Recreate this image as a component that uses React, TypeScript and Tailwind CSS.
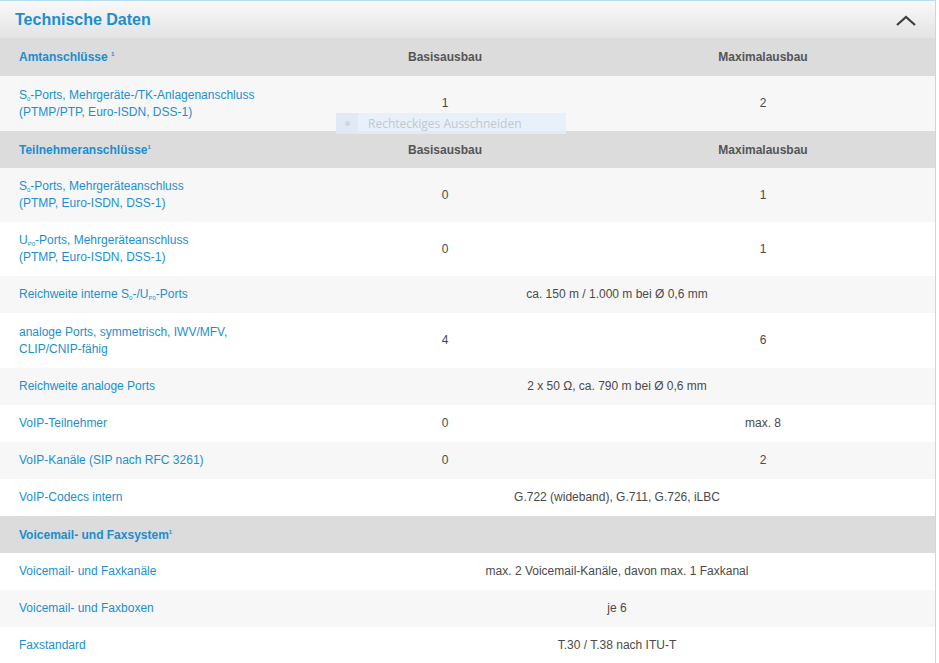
import React from "react";

type Row =
  | { kind: "section"; label: React.ReactNode; cols?: boolean; h: string }
  | { kind: "row"; label: React.ReactNode; a?: string; b?: string; span?: string; h: string; gray: boolean };

// tiny sub/superscripts, shifted without touching the line box
const Sub = ({ children }: { children: React.ReactNode }) => (
  <span className="relative top-[2px] text-[6px] leading-none">{children}</span>
);

const Sup = ({ children }: { children: React.ReactNode }) => (
  <span className="relative -top-[5px] text-[6px] leading-none">{children}</span>
);

const rows: Row[] = [
  { kind: "section", label: <>Amtanschlüsse <Sup>1</Sup></>, cols: true, h: "h-[38px]" },
  {
    kind: "row",
    label: <>S<Sub>0</Sub>-Ports, Mehrgeräte-/TK-Anlagenanschluss<br />(PTMP/PTP, Euro-ISDN, DSS-1)</>,
    a: "1",
    b: "2",
    h: "h-[55px]",
    gray: true,
  },
  { kind: "section", label: <>Teilnehmeranschlüsse<Sup>1</Sup></>, cols: true, h: "h-[37px]" },
  {
    kind: "row",
    label: <>S<Sub>0</Sub>-Ports, Mehrgeräteanschluss<br />(PTMP, Euro-ISDN, DSS-1)</>,
    a: "0",
    b: "1",
    h: "h-[54px]",
    gray: true,
  },
  {
    kind: "row",
    label: <>U<Sub>P0</Sub>-Ports, Mehrgeräteanschluss<br />(PTMP, Euro-ISDN, DSS-1)</>,
    a: "0",
    b: "1",
    h: "h-[54px]",
    gray: false,
  },
  {
    kind: "row",
    label: <>Reichweite interne S<Sub>0</Sub>-/U<Sub>P0</Sub>-Ports</>,
    span: "ca. 150 m / 1.000 m bei Ø 0,6 mm",
    h: "h-[37px]",
    gray: true,
  },
  {
    kind: "row",
    label: <>analoge Ports, symmetrisch, IWV/MFV,<br />CLIP/CNIP-fähig</>,
    a: "4",
    b: "6",
    h: "h-[55px]",
    gray: false,
  },
  { kind: "row", label: "Reichweite analoge Ports", span: "2 x 50 Ω, ca. 790 m bei Ø 0,6 mm", h: "h-[37px]", gray: true },
  { kind: "row", label: "VoIP-Teilnehmer", a: "0", b: "max. 8", h: "h-[37px]", gray: false },
  { kind: "row", label: "VoIP-Kanäle (SIP nach RFC 3261)", a: "0", b: "2", h: "h-[37px]", gray: true },
  { kind: "row", label: "VoIP-Codecs intern", span: "G.722 (wideband), G.711, G.726, iLBC", h: "h-[37px]", gray: false },
  { kind: "section", label: <>Voicemail- und Faxsystem<Sup>1</Sup></>, h: "h-[37px]" },
  { kind: "row", label: "Voicemail- und Faxkanäle", span: "max. 2 Voicemail-Kanäle, davon max. 1 Faxkanal", h: "h-[37px]", gray: false },
  { kind: "row", label: "Voicemail- und Faxboxen", span: "je 6", h: "h-[37px]", gray: true },
  { kind: "row", label: "Faxstandard", span: "T.30 / T.38 nach ITU-T", h: "h-[37px]", gray: false },
];

export default function App() {
  return (
    <div className="relative w-[939px] h-[663px] overflow-hidden bg-white font-['Liberation_Sans',Arial,sans-serif] text-[12px]">
      <div className="w-[936px] border-t border-r border-[#b5def3]">
        {/* Header */}
        <div className="flex items-center justify-between h-[37px] pl-[15px] pr-[18px] bg-gradient-to-b from-[#f9f9f9] to-[#e3e3e3]">
          <h2 className="text-[16px] font-bold text-[#1b8dd0] leading-none">Technische Daten</h2>
          <svg width="22" height="14" viewBox="0 0 22 14" className="mt-[2px]">
            <path d="M2 11 L11 3 L20 11" fill="none" stroke="#3e3e3e" strokeWidth="2.2" />
          </svg>
        </div>

        {rows.map((r, i) =>
          r.kind === "section" ? (
            <div key={i} className={`grid grid-cols-[299px_292px_1fr] items-center bg-[#dcdcdc] font-bold ${r.h}`}>
              <div className="pl-[19px] text-[#1b8dd0]">{r.label}</div>
              {r.cols && (
                <>
                  <div className="text-center text-[#555]">Basisausbau</div>
                  <div className="text-center text-[#555]">Maximalausbau</div>
                </>
              )}
            </div>
          ) : (
            <div
              key={i}
              className={`grid grid-cols-[299px_292px_1fr] items-center leading-[17px] ${r.h} ${r.gray ? "bg-[#f7f7f7]" : "bg-white"}`}
            >
              <div className="pl-[19px] text-[#1b8fd2]">{r.label}</div>
              {r.span ? (
                <div className="col-span-2 text-center text-[#4a4a4a]">{r.span}</div>
              ) : (
                <>
                  <div className="text-center text-[#4a4a4a]">{r.a}</div>
                  <div className="text-center text-[#4a4a4a]">{r.b}</div>
                </>
              )}
            </div>
          )
        )}
      </div>

      {/* screen overlay: selection tooltip */}
      <div className="absolute left-[336px] top-[113px] w-[230px] h-[21px] flex items-center bg-[#e4eef9]/80">
        <div className="w-[22px] h-full flex items-center justify-center bg-[#dde7f2]/80">
          <div className="w-[5px] h-[5px] rounded-full bg-[#cfd6de]" />
        </div>
        <span className="ml-[10px] font-['Open_Sans',sans-serif] text-[12px] text-[#c2c8ce]">Rechteckiges Ausschneiden</span>
      </div>
    </div>
  );
}
